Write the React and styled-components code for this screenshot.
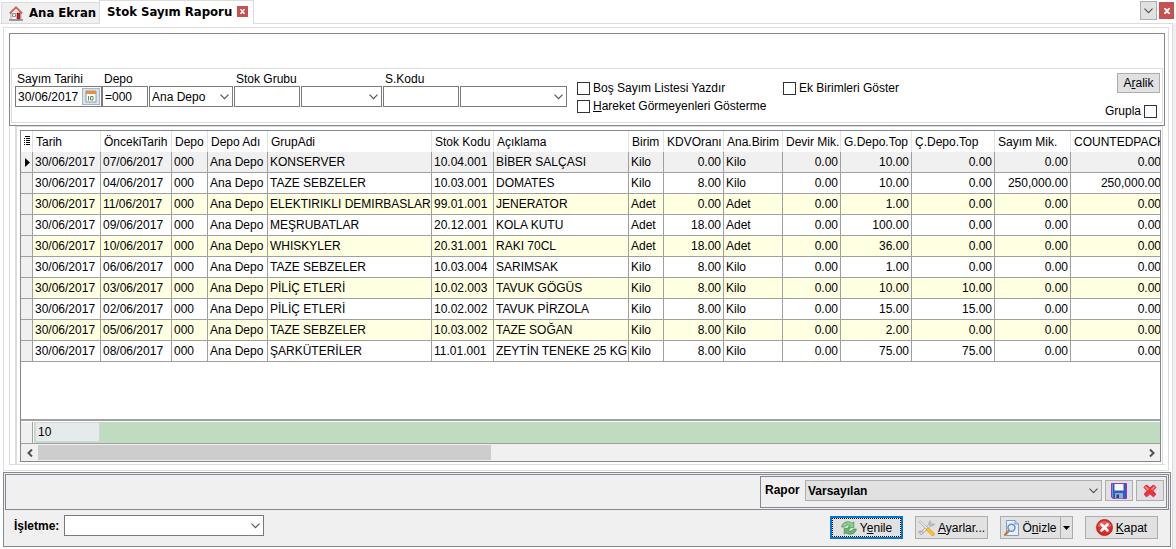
import React from 'react';
import styled, { createGlobalStyle, css } from 'styled-components';

const colors = {
  face: '#f0f0f0',
  button: '#e1e1e1',
  buttonBorder: '#adadad',
  frame: '#828790',
  line: '#dcdcdc',
  cell: '#a0a0a0',
  input: '#7a7a7a',
  stripe: '#ffffe1',
  footer: '#c0dcc0',
  close: '#c75050',
  focus: '#0078d7',
};

const GlobalStyle = createGlobalStyle`
  * {
    box-sizing: border-box;
  }
  body {
    margin: 0;
    background: #fff;
    color: #000;
    font-family: 'Liberation Sans', Arial, sans-serif;
    font-size: 12px;
    line-height: 14px;
  }
  button, input, select {
    margin: 0;
    padding: 0;
    border-radius: 0;
    color: inherit;
    font: inherit;
  }
`;

const Page = styled.div`
  display: flex;
  flex-direction: column;
  min-height: 100vh;
`;

/* Tabs */

const TabBar = styled.header`
  display: flex;
  align-items: flex-end;
  height: 23px;
  padding: 0 2px 0 1px;
`;

const Tab = styled.div`
  display: flex;
  align-items: center;
  gap: 6px;
  height: 21px;
  padding: 0 3px 0 7px;
  border: 1px solid ${colors.line};
  border-width: 1px 0 0 1px;
  background: ${colors.face};
  font-family: 'DejaVu Sans Condensed', 'DejaVu Sans', sans-serif;
  font-size: 13px;
  font-weight: bold;
  white-space: nowrap;
  ${props =>
    props.$active &&
    css`
      position: relative;
      gap: 5px;
      height: 24px;
      margin-bottom: -1px;
      padding: 0 5px 2px 7px;
      border-width: 1px 1px 0 1px;
      background: #fff;
    `}
`;

const CloseButton = styled.button`
  display: flex;
  align-items: center;
  justify-content: center;
  width: ${props => (props.$large ? 15 : 11)}px;
  height: ${props => (props.$large ? 17 : 11)}px;
  border: 0;
  background: ${colors.close};
`;

const TabTools = styled.div`
  display: flex;
  align-items: center;
  align-self: flex-start;
  gap: 2px;
  margin: 1px 0 0 auto;
`;

const TabListButton = styled.button`
  display: flex;
  align-items: center;
  justify-content: center;
  width: 17px;
  height: 19px;
  border: 1px solid ${colors.buttonBorder};
  background: ${colors.button};
`;

/* Frames */

const Workspace = styled.div`
  display: flex;
  flex: 1;
  background: ${colors.face};
  padding-right: 3px;
`;

const Body = styled.main`
  display: flex;
  flex: 1;
  flex-direction: column;
  min-width: 0;
  gap: 1px;
  padding: 3px 1px 2px 3px;
  border: 1px solid ${colors.line};
  border-width: 1px 1px 0 0;
  background: #fff;
`;

const Content = styled.div`
  display: flex;
  flex: 1;
  flex-direction: column;
  margin-right: 2px;
  padding: 5px 3px 5px 5px;
  border: 1px solid ${colors.line};
`;

const FilterFrame = styled.section`
  padding: 34px 1px 2px 1px;
  border: 1px solid ${colors.frame};
`;

const Filters = styled.form`
  display: flex;
  height: 55px;
  padding: 3px 2px 0 3px;
  border: 1px solid ${colors.line};
`;

/* Filter fields */

const Field = styled.div`
  margin-right: ${props => (props.$joined ? 0 : 1)}px;
`;

const FieldLabel = styled.label`
  display: block;
  padding-left: 2px;
  white-space: nowrap;
`;

const Controls = styled.div`
  display: flex;
  gap: 1px;
`;

const TextInput = styled.input`
  width: ${props => props.$width}px;
  height: 21px;
  padding: 0 2px;
  border: 1px solid ${colors.input};
  background: #fff;
`;

const DateBox = styled.div`
  display: flex;
  width: 87px;
  height: 21px;
  padding: 1px;
  border: 1px solid ${colors.input};
`;

const DateInput = styled.input`
  flex: 1;
  min-width: 0;
  padding: 0 1px;
  border: 0;
`;

const DateButton = styled.button`
  display: flex;
  align-items: center;
  justify-content: center;
  width: 18px;
  border: 1px solid #a9b4c2;
  background: #dbe3ee;
`;

const SelectBox = styled.div`
  position: relative;
  width: ${props => props.$width}px;
  height: 21px;

  select {
    width: 100%;
    height: 100%;
    padding: 0 20px 0 2px;
    border: 1px solid ${props => (props.$flat ? colors.buttonBorder : colors.input)};
    background: ${props => (props.$flat ? colors.button : '#fff')};
    font-weight: ${props => (props.$flat ? 'bold' : 'normal')};
    appearance: none;
  }

  svg {
    position: absolute;
    top: 8px;
    right: 4px;
    pointer-events: none;
  }
`;

const Checks = styled.div`
  display: grid;
  grid-template-columns: 206px auto;
  align-content: start;
  row-gap: 4px;
  padding: 9px 0 0 9px;
`;

const CheckLabel = styled.label`
  display: flex;
  align-items: center;
  gap: 3px;
  height: 14px;
  white-space: nowrap;
`;

const CheckBox = styled.input.attrs({ type: 'checkbox' })`
  width: 13px;
  height: 13px;
  border: 1px solid #333;
  background: #fff;
  appearance: none;

  &:checked {
    box-shadow: inset 0 0 0 2px #fff;
    background: #333;
  }
`;

const FilterSide = styled.div`
  display: flex;
  flex-direction: column;
  align-items: flex-end;
  gap: 11px;
  margin-left: auto;
  padding-top: 1px;

  ${CheckLabel} {
    padding-right: 3px;
  }
`;

/* Buttons */

const Button = styled.button`
  display: flex;
  align-items: center;
  justify-content: center;
  gap: 3px;
  width: ${props => props.$width || 73}px;
  height: ${props => props.$height || 23}px;
  border: 1px solid ${colors.buttonBorder};
  background: ${colors.button};
  white-space: nowrap;
  ${props =>
    props.$focused &&
    css`
      border: 2px solid ${colors.focus};
      outline: 1px dotted #000;
      outline-offset: -3px;
    `}
`;

const SplitButton = styled.div`
  display: flex;

  ${Button} + ${Button} {
    border-left: 0;
  }
`;

/* Grid */

const GridFrame = styled.section`
  display: flex;
  flex: 1;
  padding-left: 5px;
  border: 1px solid ${colors.line};
  border-width: 0 0 1px 1px;
`;

const GridPanel = styled.div`
  display: flex;
  flex: 1;
  min-width: 0;
  margin-right: 2px;
  padding: 3px 1px 2px 3px;
  border: 1px solid ${colors.line};
  border-width: 1px 1px 0 2px;
`;

const Grid = styled.div`
  display: flex;
  flex: 1;
  flex-direction: column;
  min-width: 0;
  border: 1px solid ${colors.frame};
`;

const GridView = styled.div`
  flex: 1;
  overflow: hidden;
`;

const Table = styled.table`
  width: 1143px;
  table-layout: fixed;
  border-collapse: separate;
  border-spacing: 0;
`;

const HeadCell = styled.th`
  height: 21px;
  padding: 0 0 0 3px;
  border-right: 1px solid #e2e2e2;
  font-weight: normal;
  text-align: left;
  white-space: nowrap;
`;

const Row = styled.tr`
  background: ${props => (props.$current ? colors.face : props.$striped ? colors.stripe : '#fff')};
`;

const Cell = styled.td`
  height: 21px;
  padding: 0 2px;
  border: 1px solid ${colors.cell};
  border-width: 0 1px 1px 0;
  text-align: ${props => props.$align || 'left'};
  white-space: nowrap;
`;

const Indicator = styled(Cell)`
  background: ${colors.face};
  line-height: 0;
`;

const Summary = styled.div`
  display: flex;
  height: 25px;
  padding-top: 1px;
  border: 0 solid ${colors.cell};
  border-width: 2px 0 1px;
`;

const SummaryHead = styled.div`
  width: 12px;
  border-right: 1px solid ${colors.cell};
  background: ${colors.face};
`;

const SummaryBar = styled.div`
  flex: 1;
  margin-left: 1px;
  padding-left: 1px;
  background: ${colors.footer};
`;

const SummaryCell = styled.div`
  width: 65px;
  height: 20px;
  padding: 2px;
  border: 1px solid #d2d6d8;
  background: #e5eaea;
`;

const ScrollBar = styled.div`
  display: flex;
  height: 17px;
  padding: 1px 0;
  background: ${colors.face};
`;

const ScrollButton = styled.button`
  display: flex;
  align-items: center;
  justify-content: center;
  width: 17px;
  border: 0;
  background: none;
`;

const ScrollTrack = styled.div`
  flex: 1;
`;

const ScrollThumb = styled.div`
  width: 41%;
  height: 100%;
  background: #cdcdcd;
`;

/* Bottom bar */

const BottomBar = styled.footer`
  padding: 1px;
  border: 1px solid ${colors.frame};
  background: ${colors.face};
`;

const ReportBar = styled.div`
  display: flex;
  justify-content: flex-end;
  padding: 1px;
  border: 1px solid ${colors.frame};
`;

const ReportBox = styled.div`
  display: flex;
  align-items: center;
  gap: 3px;
  padding: 3px 2px 6px 4px;
  border: 1px solid ${colors.frame};
`;

const BoldLabel = styled.label`
  width: ${props => props.$width}px;
  font-weight: bold;
  line-height: 21px;
  white-space: nowrap;
`;

const CommandBar = styled.div`
  display: flex;
  align-items: flex-start;
  padding: 5px 11px 6px 9px;

  ${BoldLabel} {
    padding-top: 1px;
  }
`;

const Commands = styled.div`
  display: flex;
  gap: 12px;
  margin: 1px 0 0 auto;
`;

/* Icons */

const Chevron = () => (
  <svg width="9" height="6" viewBox="0 0 9 6" fill="none" stroke="#555" strokeWidth="1.2">
    <path d="M.5 .7 4.5 4.7 8.5 .7" />
  </svg>
);

const CrossIcon = ({ size = 5 }) => (
  <svg width={size} height={size} viewBox="0 0 5 5" stroke="#fff" strokeWidth="1.6">
    <path d="M.3 0 4.7 5M4.7 0 .3 5" />
  </svg>
);

const HomeIcon = () => (
  <svg width="14" height="15" viewBox="0 0 14 15">
    <path d="M2 6.5 7 2l5 4.5V14H2z" fill="#f4f2ee" stroke="#9a9a9a" strokeWidth=".8" />
    <path d="M.8 7.5 7 1.3l6.2 6.2" fill="none" stroke="#d3625a" strokeWidth="1.8" />
    <path d="M3.5 7.5h3v3h-3z" fill="#dfe9ec" stroke="#777" strokeWidth=".8" />
    <path d="M8 7h3v6H8z" fill="#c51f1f" stroke="#8f1717" strokeWidth=".6" />
    <path d="M0 14h14" stroke="#8a8a8a" strokeWidth="1.6" />
  </svg>
);

const CalendarIcon = () => (
  <svg width="12" height="13" viewBox="0 0 12 13">
    <path d="M1 1h10v11H1z" fill="#fffef6" stroke="#8b98ab" />
    <path d="M1 1h10v3H1z" fill="#e8913a" />
    <path d="M3.5 6v4.5M5.5 6.5h2.5v3.5H5.5z" fill="none" stroke="#5f8a5c" />
  </svg>
);

const GridIcon = () => (
  <svg width="6" height="10" viewBox="0 0 6 10" stroke="#000" shapeRendering="crispEdges">
    <path d="M1 .5h5M2 2.5h4M2 4.5h4M2 6.5h4M2 8.5h4M0 2.5h1M0 4.5h1M0 6.5h1M0 8.5h1" />
  </svg>
);

const CurrentRowIcon = () => (
  <svg width="5" height="9" viewBox="0 0 5 9">
    <path d="M0 0 5 4.5 0 9z" />
  </svg>
);

const ArrowIcon = ({ right }) => (
  <svg width="6" height="8" viewBox="0 0 6 8" fill="none" stroke="#505050" strokeWidth="2">
    <path d={right ? 'M1 .5 4.5 4 1 7.5' : 'M5 .5 1.5 4 5 7.5'} />
  </svg>
);

const DropIcon = () => (
  <svg width="7" height="4" viewBox="0 0 7 4">
    <path d="M0 0h7L3.5 4z" />
  </svg>
);

const SaveIcon = () => (
  <svg width="16" height="16" viewBox="0 0 16 16">
    <path d="M.5 .5h15v15H2L.5 14z" fill="#2f5bc4" stroke="#a32fc8" />
    <path d="M1.5 1v13" stroke="#5d93ea" />
    <path d="M3.5 1h9v6.5h-9z" fill="#f7fafc" />
    <path d="M4 10h8v5.5H4z" fill="#8fb0b8" />
    <path d="M5.5 11.5H8v3.5H5.5z" fill="#24408c" />
  </svg>
);

const DeleteIcon = () => (
  <svg width="14" height="14" viewBox="0 0 14 14">
    <path
      d="M1 3.5Q2 1 4 1.2L7 4l3-2.8q2 0 3 2.3L9.8 6.8l2.900 3.200q-.7 2.300-2.500 2.700L7 9.800l-3.200 2.900Q1.800 12 1.300 10l2.900-3.200z"
      fill="#e83a22"
      stroke="#e6249b"
      strokeWidth="1"
      strokeLinejoin="round"
    />
    <path d="M2.8 3.2 5 5.2M11.2 3.2 9 5.2" stroke="#f58a5a" strokeWidth="1.8" strokeLinecap="round" />
  </svg>
);

const RefreshIcon = () => (
  <svg width="16" height="16" viewBox="0 0 16 16" stroke="#3f8f45" strokeWidth=".7" strokeLinejoin="round">
    <path d="M.6 7C1.2 3.400 4 1.600 7.500 1.800c1.500.1 2.700.6 3.700 1.400L12.800 1.800v5.800H7L8.900 5.600C7 4.300 4.600 4.800 3.600 7z" fill="#8fd08e" />
    <path d="M15.400 9c-.6 3.600-3.400 5.400-6.900 5.200-1.500-.1-2.700-.6-3.700-1.400L3.200 14.200V8.400H9L7.100 10.400c1.900 1.300 4.300.8 5.300-1.400z" fill="#68b56d" />
  </svg>
);

const ToolsIcon = () => (
  <svg width="17" height="16" viewBox="0 0 17 16" fill="none" strokeLinecap="round">
    <path d="M3 13.5 13 4" stroke="#a6a6a6" strokeWidth="3" />
    <path d="M3 13.5 13 4" stroke="#e8e8e8" strokeWidth="1.6" />
    <path d="M12.2 1.3c-1.5 1.5-1 4 1 4.3 1.2.1 2.2-.3 2.8-1.3M1 12c1-1 3-1 4 1" stroke="#b5b5b5" strokeWidth="1.8" />
    <path d="M1.8 1.5 9 8.5" stroke="#aaa" strokeWidth="2.4" />
    <path d="M1.5 1.2 9 8.5" stroke="#f0f0f0" strokeWidth="1.1" />
    <path d="M10 9.5 14.7 14" stroke="#d29a1c" strokeWidth="3.8" />
    <path d="M10 9.5 14.7 14" stroke="#ffc02e" strokeWidth="2.6" />
  </svg>
);

const PreviewIcon = () => (
  <svg width="15" height="16" viewBox="0 0 15 16">
    <path d="M2.5 .5H11L14.5 4v11.5h-12z" fill="#e9f1fc" stroke="#7d9ccb" />
    <path d="M11 .5V4h3.5" fill="#b9cdec" stroke="#7d9ccb" />
    <path d="M1.2 14.8 4.8 10.8" stroke="#c87a2e" strokeWidth="2.4" strokeLinecap="round" />
    <circle cx="7.5" cy="7.8" r="3.5" fill="#d5e8fb" stroke="#6d88bd" strokeWidth="1.4" />
    <path d="M5.7 7.5c.2-1.2 1-1.6 2-1.6" fill="none" stroke="#fff" />
  </svg>
);

const CancelIcon = () => (
  <svg width="17" height="17" viewBox="0 0 17 17">
    <circle cx="8.5" cy="8.5" r="8" fill="#dd2a27" stroke="#b31616" strokeWidth=".8" />
    <path d="M1.6 7.5a7 7 0 0 1 13.8 0Q8.5 10 1.6 7.5z" fill="#f0807a" opacity=".55" />
    <path d="M5.5 5.5l6 6M11.5 5.5l-6 6" stroke="#fff" strokeWidth="2.8" strokeLinecap="round" />
  </svg>
);

const columns = [
  { title: 'Tarih', width: 68 },
  { title: 'ÖncekiTarih', width: 71 },
  { title: 'Depo', width: 36 },
  { title: 'Depo Adı', width: 60 },
  { title: 'GrupAdi', width: 164 },
  { title: 'Stok Kodu', width: 62 },
  { title: 'Açıklama', width: 135 },
  { title: 'Birim', width: 35 },
  { title: 'KDVOranı', width: 60, align: 'right' },
  { title: 'Ana.Birim', width: 59 },
  { title: 'Devir Mik.', width: 58, align: 'right' },
  { title: 'G.Depo.Top', width: 71, align: 'right' },
  { title: 'Ç.Depo.Top', width: 83, align: 'right' },
  { title: 'Sayım Mik.', width: 76, align: 'right' },
  { title: 'COUNTEDPACK', width: 93, align: 'right' },
];

// previous date, group, code, description, unit, vat, in, out, counted
const items = [
  ['07/06/2017', 'KONSERVER', '10.04.001', 'BİBER SALÇASI', 'Kilo', '0.00', '10.00', '0.00', '0.00'],
  ['04/06/2017', 'TAZE SEBZELER', '10.03.001', 'DOMATES', 'Kilo', '8.00', '10.00', '0.00', '250,000.00'],
  ['11/06/2017', 'ELEKTIRIKLI DEMIRBASLAR', '99.01.001', 'JENERATOR', 'Adet', '0.00', '1.00', '0.00', '0.00'],
  ['09/06/2017', 'MEŞRUBATLAR', '20.12.001', 'KOLA KUTU', 'Adet', '18.00', '100.00', '0.00', '0.00'],
  ['10/06/2017', 'WHISKYLER', '20.31.001', 'RAKI 70CL', 'Adet', '18.00', '36.00', '0.00', '0.00'],
  ['06/06/2017', 'TAZE SEBZELER', '10.03.004', 'SARIMSAK', 'Kilo', '8.00', '1.00', '0.00', '0.00'],
  ['03/06/2017', 'PİLİÇ ETLERİ', '10.02.003', 'TAVUK GÖGÜS', 'Kilo', '8.00', '10.00', '10.00', '0.00'],
  ['02/06/2017', 'PİLİÇ ETLERİ', '10.02.002', 'TAVUK PİRZOLA', 'Kilo', '8.00', '15.00', '15.00', '0.00'],
  ['05/06/2017', 'TAZE SEBZELER', '10.03.002', 'TAZE SOĞAN', 'Kilo', '8.00', '2.00', '0.00', '0.00'],
  ['08/06/2017', 'ŞARKÜTERİLER', '11.01.001', 'ZEYTİN TENEKE 25 KG', 'Kilo', '8.00', '75.00', '75.00', '0.00'],
];

const toCells = ([previous, group, code, name, unit, vat, received, left, counted]) => [
  '30/06/2017', previous, '000', 'Ana Depo', group, code, name, unit, vat, unit, '0.00', received, left, counted, counted,
];

const Select = ({ id, label, width, value = '', flat }) => (
  <SelectBox $width={width} $flat={flat}>
    <select id={id} aria-label={label} defaultValue={value}>
      <option value={value}>{value}</option>
    </select>
    <Chevron />
  </SelectBox>
);

const FilterBar = () => (
  <FilterFrame>
    <Filters onSubmit={e => e.preventDefault()}>
      <Field $joined>
        <FieldLabel htmlFor="date">Sayım Tarihi</FieldLabel>
        <DateBox>
          <DateInput id="date" defaultValue="30/06/2017" />
          <DateButton type="button" aria-label="Takvim">
            <CalendarIcon />
          </DateButton>
        </DateBox>
      </Field>
      <Field>
        <FieldLabel htmlFor="depot">Depo</FieldLabel>
        <Controls>
          <TextInput id="depot" $width={46} defaultValue="=000" />
          <Select label="Depo adı" width={84} value="Ana Depo" />
        </Controls>
      </Field>
      <Field>
        <FieldLabel htmlFor="group">Stok Grubu</FieldLabel>
        <Controls>
          <TextInput id="group" $width={66} />
          <Select label="Stok grubu adı" width={81} />
        </Controls>
      </Field>
      <Field>
        <FieldLabel htmlFor="code">S.Kodu</FieldLabel>
        <Controls>
          <TextInput id="code" $width={76} />
          <Select label="Stok adı" width={107} />
        </Controls>
      </Field>
      <Checks>
        <CheckLabel>
          <CheckBox />
          Boş Sayım Listesi Yazdır
        </CheckLabel>
        <CheckLabel>
          <CheckBox />
          Ek Birimleri Göster
        </CheckLabel>
        <CheckLabel>
          <CheckBox />
          <span>
            <u>H</u>areket Görmeyenleri Gösterme
          </span>
        </CheckLabel>
      </Checks>
      <FilterSide>
        <Button type="button" $width={43} $height={20}>
          <span>
            A<u>r</u>alik
          </span>
        </Button>
        <CheckLabel>
          Grupla
          <CheckBox />
        </CheckLabel>
      </FilterSide>
    </Filters>
  </FilterFrame>
);

const StockGrid = () => (
  <GridFrame>
    <GridPanel>
      <Grid>
        <GridView>
          <Table>
            <colgroup>
              <col style={{ width: 12 }} />
              {columns.map(c => (
                <col key={c.title} style={{ width: c.width }} />
              ))}
            </colgroup>
            <thead>
              <tr>
                <HeadCell>
                  <GridIcon />
                </HeadCell>
                {columns.map(c => (
                  <HeadCell key={c.title}>{c.title}</HeadCell>
                ))}
              </tr>
            </thead>
            <tbody>
              {items.map((item, i) => (
                <Row key={item[2]} $current={i === 0} $striped={i % 2 === 0}>
                  <Indicator $align="right">{i === 0 ? <CurrentRowIcon /> : null}</Indicator>
                  {toCells(item).map((value, n) => (
                    <Cell key={columns[n].title} $align={columns[n].align}>
                      {value}
                    </Cell>
                  ))}
                </Row>
              ))}
            </tbody>
          </Table>
        </GridView>
        <Summary>
          <SummaryHead />
          <SummaryBar>
            <SummaryCell>{items.length}</SummaryCell>
          </SummaryBar>
        </Summary>
        <ScrollBar>
          <ScrollButton aria-label="Sola kaydır">
            <ArrowIcon />
          </ScrollButton>
          <ScrollTrack>
            <ScrollThumb />
          </ScrollTrack>
          <ScrollButton aria-label="Sağa kaydır">
            <ArrowIcon right />
          </ScrollButton>
        </ScrollBar>
      </Grid>
    </GridPanel>
  </GridFrame>
);

const Footer = () => (
  <BottomBar>
    <ReportBar>
      <ReportBox>
        <BoldLabel htmlFor="report" $width={37}>
          Rapor
        </BoldLabel>
        <Select id="report" width={297} value="Varsayılan" flat />
        <Button $width={28} $height={21} aria-label="Kaydet">
          <SaveIcon />
        </Button>
        <Button $width={28} $height={21} aria-label="Sil">
          <DeleteIcon />
        </Button>
      </ReportBox>
    </ReportBar>
    <CommandBar>
      <BoldLabel htmlFor="company" $width={50}>
        İşletme:
      </BoldLabel>
      <Select id="company" width={200} />
      <Commands>
        <Button $focused>
          <RefreshIcon />
          <span>
            Y<u>e</u>nile
          </span>
        </Button>
        <Button>
          <ToolsIcon />
          <span>
            <u>A</u>yarlar...
          </span>
        </Button>
        <SplitButton>
          <Button $width={61}>
            <PreviewIcon />
            <span>
              Ö<u>n</u>izle
            </span>
          </Button>
          <Button $width={12} aria-label="Önizleme seçenekleri">
            <DropIcon />
          </Button>
        </SplitButton>
        <Button>
          <CancelIcon />
          <span>
            <u>K</u>apat
          </span>
        </Button>
      </Commands>
    </CommandBar>
  </BottomBar>
);

const App = () => (
  <Page>
    <GlobalStyle />
    <TabBar>
      <Tab>
        <HomeIcon />
        Ana Ekran
      </Tab>
      <Tab $active>
        Stok Sayım Raporu
        <CloseButton aria-label="Sekmeyi kapat">
          <CrossIcon />
        </CloseButton>
      </Tab>
      <TabTools>
        <TabListButton aria-label="Sekmeler">
          <Chevron />
        </TabListButton>
        <CloseButton $large aria-label="Kapat">
          <CrossIcon size={6} />
        </CloseButton>
      </TabTools>
    </TabBar>
    <Workspace>
      <Body>
        <Content>
          <FilterBar />
          <StockGrid />
        </Content>
        <Footer />
      </Body>
    </Workspace>
  </Page>
);

export default App;
